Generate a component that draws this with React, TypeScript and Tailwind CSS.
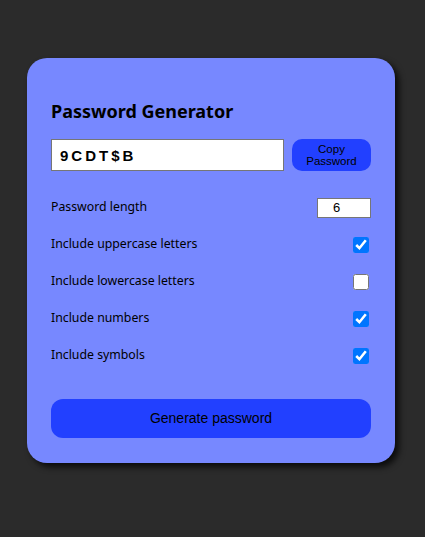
import { useState } from "react";

const options = [
  { key: "upper", label: "Include uppercase letters", on: true },
  { key: "lower", label: "Include lowercase letters", on: false },
  { key: "numbers", label: "Include numbers", on: true },
  { key: "symbols", label: "Include symbols", on: true },
];

export default function App() {
  const [length, setLength] = useState(6);
  const [flags, setFlags] = useState<Record<string, boolean>>(
    Object.fromEntries(options.map((o) => [o.key, o.on]))
  );

  return (
    <div className="min-h-[537px] bg-[#2b2b2b] flex justify-center pr-[3px] pt-[58px] font-['Noto_Sans',sans-serif]">
      <div className="w-[368px] h-[405px] bg-[#7788ff] rounded-[20px] px-6 pt-[38px] shadow-[4px_4px_6px_rgba(0,0,0,0.75)]">
        {/* title */}
        <h1 className="text-[18px] font-bold text-black leading-[30px]">
          Password Generator
        </h1>

        {/* output + copy */}
        <div className="flex items-center gap-2 mt-[13px]">
          <input
            readOnly
            value="9CDT$B"
            className="w-[233px] h-8 bg-white border border-[#767676] px-2 text-[15px] font-bold tracking-[3px] text-black font-['Liberation_Sans',Arial,sans-serif] outline-none"
          />
          <button className="w-[79px] h-8 rounded-[10px] bg-[#2240ff] text-[11.5px] leading-[12px] font-normal text-black font-['Liberation_Sans',Arial,sans-serif] flex flex-col items-center justify-center">
            <span>Copy</span>
            <span>Password</span>
          </button>
        </div>

        {/* settings */}
        <div className="mt-[26px] flex flex-col text-[12.3px] text-black">
          <div className="flex items-center justify-between h-[21px]">
            <label>Password length</label>
            <input
              type="number"
              value={length}
              onChange={(e) => setLength(Number(e.target.value))}
              className="w-[54px] h-5 bg-white border border-[#767676] text-center text-[13px] text-black font-['Liberation_Sans',Arial,sans-serif] outline-none"
            />
          </div>
          {options.map((o) => (
            <div key={o.key} className="flex items-center justify-between h-[21px] mt-[16px]">
              <label>{o.label}</label>
              <input
                type="checkbox"
                checked={flags[o.key]}
                onChange={() => setFlags((p) => ({ ...p, [o.key]: !p[o.key] }))}
                className="w-4 h-4 mr-[2px] accent-[#0075ff]"
              />
            </div>
          ))}
        </div>

        <button className="mt-[33px] w-full h-[39px] rounded-[12px] bg-[#2240ff] text-[14px] text-black font-['Liberation_Sans',Arial,sans-serif]">
          Generate password
        </button>
      </div>
    </div>
  );
}
